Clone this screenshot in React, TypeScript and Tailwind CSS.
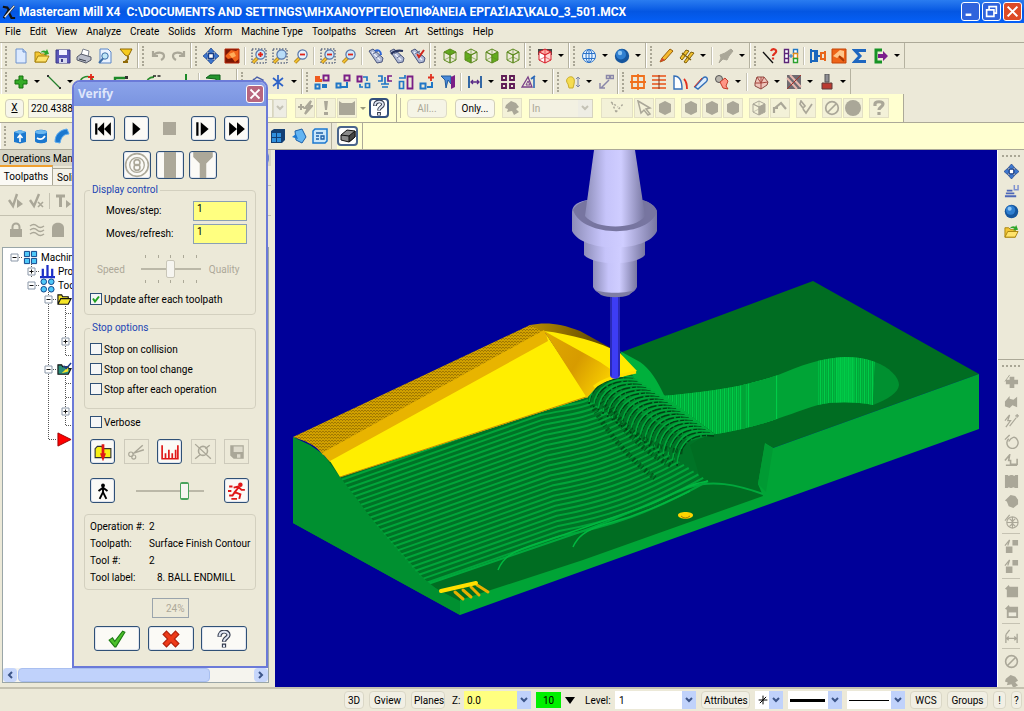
import type { ReactNode } from "react";
import clsx from "clsx";

const GREY = "#aaa798";

function Glyph({ children, size = 16 }: { children: ReactNode; size?: number }) {
  return (
    <svg width={size} height={size} viewBox="0 0 16 16" fill="none" aria-hidden="true" className="shrink-0">
      {children}
    </svg>
  );
}

function Cube({ top = "none", left = "none", right = "none", color = "#5c8a1e" }: { top?: string; left?: string; right?: string; color?: string }) {
  return (
    <g stroke={color} strokeWidth="1">
      <path d="M2 4l6-3 6 3-6 3z" fill={top} />
      <path d="M2 4l6 3v8l-6-3z" fill={left} />
      <path d="M14 4L8 7v8l6-3z" fill={right} />
      <path d="M8 1v6M2 12l6-3 6 3" strokeWidth=".6" />
    </g>
  );
}

function Lens({ color, sign, boxed }: { color: string; sign?: string; boxed?: boolean }) {
  return (
    <>
      {boxed && <path d="M1 1h14v14H1z" stroke="#23345e" strokeDasharray="1.5 1.5" />}
      <path d="M6.5 10L2 14.5" stroke="#a97a14" strokeWidth="3.4" />
      <path d="M6.5 10L2 14.5" stroke="#f0c030" strokeWidth="2" />
      <circle cx="9.5" cy="6.5" r="4.6" fill={color} stroke="#5373a8" strokeWidth="1.2" />
      {sign && <path d={sign} stroke="#e02418" strokeWidth="1.8" />}
    </>
  );
}

function Probe({ mark, color }: { mark: string; color: string }) {
  return (
    <>
      <path d="M1 3l4-2 10 9-1 4-5 1z" fill="#aeb8d4" stroke="#4a557c" />
      <path d="M4 4l8 8" stroke="#eef1fa" strokeWidth="1.5" />
      <path d="M5 6l5-3M8 10l4-3" stroke="#5b688f" />
      <path d={mark} stroke={color} strokeWidth="2" />
    </>
  );
}

const PLUS = "M9.5 4v5M7 6.5h5";
const MINUS = "M7 6.5h5";
const HEXAGON = "M8 1l6 3v8l-6 3-6-3V4z";

const glyphs: Record<string, ReactNode> = {
  new: <><path d="M3 1h7l3 3v11H3z" fill="#dceaff" stroke="#6f92cc" /><path d="M10 1v3h3" fill="#b9d0f3" stroke="#6f92cc" /></>,
  open: <><path d="M1 14V4h4l2 2h5v8z" fill="#f4c632" stroke="#a8830f" /><path d="M1 14l3-6h11l-3 6z" fill="#ffe36b" stroke="#a8830f" /><path d="M6 5c2-3 4-3 6-2l1-2 2 5-5 1 1-2c-2-1-3-1-5 0z" fill="#2fa62b" /></>,
  save: <><path d="M1 2h14v13H1z" fill="#5b57b8" stroke="#3b3a86" /><path d="M4 2h8v5H4z" fill="#f3f3ff" /><path d="M4 10h8v5H4z" fill="#d6d8ee" /><path d="M6 11h2v3H6z" fill="#3b3a86" /></>,
  print: <><path d="M5 7l2-6 6 2-1 6z" fill="#fff" stroke="#7d8390" /><path d="M1 9l4-3 10 3v3l-5 3-9-3z" fill="#b9bdc9" stroke="#565b69" /><path d="M3 11l7 2" stroke="#383d49" /></>,
  preview: <><path d="M3 1h8l3 3v11H3z" fill="#eaf3ff" stroke="#5a86c8" /><circle cx="8" cy="8" r="3.2" fill="#bfe6f7" stroke="#3d6ea8" /><path d="M6 10.5L2 15" stroke="#3d6ea8" strokeWidth="2" /></>,
  trophy: <><path d="M2 1h12l-3 6-2 1-2-1z" fill="#f7cb1d" stroke="#8f6907" /><path d="M10 8v3l-3 3M5 14h5" stroke="#8f6907" strokeWidth="1.8" /></>,
  undo: <path d="M3 3v5h5M3 8c3-5 11-4 11 0 0 2-1 3-3 4" stroke={GREY} strokeWidth="2.2" />,
  redo: <path d="M13 3v5H8M13 8C10 3 2 4 2 8c0 2 1 3 3 4" stroke={GREY} strokeWidth="2.2" />,
  pan: <><path d="M8 0l3.500 4h-7zM8 16l3.500-4h-7zM0 8l4-3.500v7zM16 8l-4-3.500v7z" fill="#3e78cf" stroke="#173d86" strokeWidth=".7" /><path d="M8 3v10M3 8h10" stroke="#3e78cf" strokeWidth="3" /><path d="M5.500 5.500h5v5h-5z" fill="#fff" stroke="#173d86" strokeWidth="1.400" /></>,
  fit: <><path d="M1 1h14v14H1z" fill="#7c1704" /><path d="M1 8l6-6 5 1 3-2v10l-4 3-3-4-4 1z" fill="#f0641c" /><path d="M5 6l5-2 2 4-4 2z" fill="#ffad5a" /><path d="M1 1h14v14H1z" stroke="#b32408" /></>,
  zoomIn: <Lens color="#cfe9fb" sign={PLUS} boxed />,
  zoomBox: <Lens color="#b8dcf8" boxed />,
  zoomDot: <Lens color="#e9f4fd" sign={MINUS} />,
  zoomOutBox: <Lens color="#cfe9fb" sign={MINUS} boxed />,
  zoomOut: <Lens color="#cfe9fb" sign={MINUS} />,
  probeA: <Probe mark="M7 3c3-2 6 0 6 4" color="#2b64d6" />,
  probeB: <Probe mark="M2 6c3-3 7-4 12-3" color="#27345f" />,
  probeC: <Probe mark="M7 6l2 3 5-7" color="#d1271c" />,
  cubeTop: <Cube top="#62ac1d" />,
  cubeLeft: <Cube left="#62ac1d" />,
  cubeRight: <Cube right="#62ac1d" />,
  cubeIso: <Cube />,
  cubeRed: <><path d="M1 1h14v6H1z" fill="#444" /><Cube top="#ffb1aa" left="#fff" right="#ffd7d3" color="#d81f2a" /></>,
  globe: <g stroke="#2b73c9"><circle cx="8" cy="8" r="6.500" fill="#e8f4ff" /><ellipse cx="8" cy="8" rx="3" ry="6.500" /><path d="M2 5.500h12M2 10.500h12M8 1.500v13" /></g>,
  sphere: <><circle cx="8" cy="8" r="7.200" fill="#16569e" /><circle cx="7" cy="6.500" r="5" fill="#2f7fd0" /><circle cx="6" cy="5" r="2.200" fill="#8ec6f4" /></>,
  pencil: <><path d="M2 14l2-4 8-9 3 2-8 9z" fill="#f5b92c" stroke="#99600a" /><path d="M2 14l2-4 3 2z" fill="#d8442c" /></>,
  pencils: <><path d="M1 10l6-8 3 1-7 9zM5 14l7-10 3 1-8 10z" fill="#f2c22f" stroke="#80600c" /><path d="M3 5l9 7" stroke="#80600c" strokeWidth="1.500" /></>,
  brushOff: <path d="M1 15l2-5-1-3 5-2 6-4 2 2-4 5-2 4-4-1z" fill={GREY} stroke={GREY} />,
  lineAsk: <><path d="M1 4l10 11" stroke="#111" strokeWidth="1.300" /><path d="M9 3c1-3 6-2 5 1-1 2-3 2-3 4M11 9.500v2" stroke="#e0301e" strokeWidth="2.200" /></>,
  ladders: <><path d="M1.500 1.500h4v4h-4zM1.500 5.500h4v5h-4zM1.500 10.500h4v4h-4z" stroke="#5b2478" strokeWidth="1.400" fill="#fff" /><path d="M10.500 1.500h4v4h-4z" stroke="#2077c6" strokeWidth="1.400" fill="#fff" /><path d="M10.500 5.500h4v5h-4z" stroke="#e08a1a" strokeWidth="1.400" fill="#fff" /><path d="M10.500 10.500h4v4h-4z" stroke="#2aa02c" strokeWidth="1.400" fill="#fff" /><path d="M6 8h4M8 6v4" stroke="#2077c6" /></>,
  compare: <><path d="M1 1v14M1 3h3M1 13h3" stroke="#1a67bd" strokeWidth="2" /><path d="M4 2h4v5h2v2H8v5H4z" fill="#1a67bd" /><path d="M15 3v10M14 5h-3v6h3" stroke="#e8661c" strokeWidth="2" /></>,
  hammer: <><path d="M1 1h14v14H1z" fill="#ee6418" stroke="#c44507" /><path d="M2 8l7-6 4 1v7l-4-2-3 2z" fill="#ffc68a" /><path d="M8 8l5 5" stroke="#a93a04" strokeWidth="2" /></>,
  sigma: <path d="M14 2.500H3l5 5.500-5 5.500h11" stroke="#1e67c0" strokeWidth="3" />,
  exportG: <><path d="M9 2H3v12h6" stroke="#169325" strokeWidth="3" /><path d="M5 6h5V3l5 5-5 5v-3H5z" fill="#7b1d8c" /></>,
  plus: <path d="M6 2h4v4h4v4h-4v4H6v-4H2V6h4z" fill="#35ab26" stroke="#15700f" />,
  line: <><path d="M2 2l12 12" stroke="#23802c" strokeWidth="1.300" /><path d="M1 1h2v2H1zM13 13h2v2h-2z" fill="#333" /></>,
  arc: <><path d="M1 9a7 7 0 0113-3" stroke="#2a8b2c" strokeWidth="1.500" /><path d="M12 0v7M9 3h6" stroke="#e02a1a" strokeWidth="1.800" /></>,
  corner: <><path d="M3 15V4h10" stroke="#1d8a29" strokeWidth="2.400" /><path d="M13 2h3v3h-3z" fill="#333" /></>,
  dashArc: <><path d="M1 12c0-6 3-9 8-9" stroke="#2a8b2c" strokeWidth="1.800" /><path d="M8 2h8" stroke="#222" strokeWidth="1.600" strokeDasharray="3 1.500" /></>,
  stem: <path d="M8 0v16M5 15h7" stroke="#1d8a29" strokeWidth="2" />,
  slab: <path d="M1 4l4-3h10v12l-4 2V5z" fill="#23942c" stroke="#0f5f18" />,
  dimension: <path d="M1 9l7-6 6 3-4 8M4 5l6 7" stroke="#4a5fa8" strokeWidth="1.400" />,
  star: <path d="M8 1v14M3 4l10 8M13 4L3 12" stroke="#2d62c8" strokeWidth="1.700" />,
  xform1: <><path d="M9.500 1.500h5v5h-5z" stroke="#7a1e86" strokeWidth="2" /><path d="M1 2h5v3h2v3H1z" fill="#ef5b1f" /><path d="M1.500 10.500h4v4h-4z" stroke="#2077c6" strokeWidth="2" /><path d="M8 10h5v4H8z" fill="#2077c6" /></>,
  xform2: <><path d="M9.500 1.500h5v5h-5z" stroke="#7a1e86" strokeWidth="2" /><path d="M1.500 9.500h4v4h-4zM6 13h6V8" stroke="#2077c6" strokeWidth="2" /></>,
  xform3: <><path d="M1.500 2.500h4v5h-4z" stroke="#7a1e86" strokeWidth="2" /><path d="M9.500 9.500h4v4h-4zM7 3h4v4M4 10v3h3" stroke="#2077c6" strokeWidth="1.700" /></>,
  xform4: <><path d="M1 2h4v5H1M4 10h8M8 3v7M5 13h6" stroke="#2077c6" strokeWidth="1.700" /><path d="M15 2h-4v5h4" stroke="#7a1e86" strokeWidth="1.700" /></>,
  xform5: <><path d="M9.500 2.500h5v12h-5z" stroke="#7a1e86" strokeWidth="1.800" /><path d="M1.500 7.500h4v7h-4zM1 4h6V1" stroke="#2077c6" strokeWidth="1.700" /></>,
  xform6: <><path d="M1.500 9.500h5v5h-5zM8 13h5V8" stroke="#2077c6" strokeWidth="2" /><path d="M12 0v7M9 3.500h6" stroke="#e0301e" strokeWidth="1.800" /></>,
  xform7: <><path d="M1 2h10v8L8 6 6 14 5 6z" fill="#4a8ad8" stroke="#205a9e" /><path d="M11 3l4-2v12l-4 2z" fill="#7a1e86" /></>,
  spread: <><path d="M2 2v12M14 2v12" stroke="#205a9e" strokeWidth="1.800" /><path d="M4 8h8M6 6L4 8l2 2M10 6l2 2-2 2" stroke="#5a2a86" strokeWidth="1.300" /></>,
  grid4: <path d="M2 2h4v4H2zM10 2h4v4h-4zM2 10h4v4H2zM10 10h4v4h-4z" stroke="#5f1c56" strokeWidth="1.900" />,
  triangle: <><path d="M1 13L7 3l4 10z" stroke="#7a4088" strokeWidth="1.300" /><path d="M5 11l2-4 2 4z" stroke="#7a4088" /><path d="M13 14V3M10 5l4-3" stroke="#2b68b8" strokeWidth="1.600" /></>,
  bulb: <><path d="M3 10c-6-7 9-12 6 0l-1 4H4z" fill="#f5dc50" stroke="#c9ad2c" /><path d="M13 3v10M11 5l2-2 2 2M11 11l2 2 2-2" stroke="#7d86a8" /></>,
  nodes: <path d="M3 14l8-8M8.500 1.500h3v3h-3zM12.500 1.500h3v3h-3zM2 9v5h5" stroke="#8a87a8" strokeWidth="1.500" />,
  frame: <path d="M2 2h12v12H2zM8 0v16M0 8h16" stroke="#f0701c" strokeWidth="1.800" />,
  rows: <><path d="M1 2h14M1 6h14M1 10h14M1 14h14" stroke="#e85016" strokeWidth="1.700" /><path d="M8 1v14" stroke="#88331a" /></>,
  loft: <><path d="M2 15V2c6 0 8 5 8 13z" fill="#fff" stroke="#3570b8" strokeWidth="1.400" /><path d="M12 5c2 2 3 6 3 10" stroke="#e0301e" strokeWidth="1.800" /></>,
  sweep: <><path d="M2 13l8-9c3-3 6 1 3 4l-8 7z" fill="#dfeefc" stroke="#3570b8" strokeWidth="1.400" /><path d="M1 13l8-9" stroke="#e0301e" /></>,
  mesh: <><circle cx="5" cy="5" r="3.500" fill="#b9b5ad" stroke="#555" /><path d="M6 8l5-4 3 3-2 5 2 3-5-1z" fill="#ff9686" stroke="#c33c2a" /></>,
  net: <><path d="M2 9l2-6h7l4 5-1 3-6 4-6-3z" fill="#efc5bb" stroke="#8c4a42" /><path d="M4 3l4 6 7-1M8 3v12M2 9h6M11 3l-3 6" stroke="#a6453c" /></>,
  hatch: <><path d="M1 1h14v14H1z" fill="#6f6a70" /><path d="M1 4l10 11M4 1l11 12" stroke="#e8b7ae" strokeWidth="2" /><path d="M1 15L15 1" stroke="#a4342c" /></>,
  cutter: <><path d="M6 0h4v8H6z" fill="#8e8e94" stroke="#555" /><path d="M3 9h10v6H3z" fill="#ba3a31" stroke="#5d3a3a" /></>,
  flash: <path d="M1 7h6M4 4v6M14 1L8 8h3l-3 6 7-8h-3z" stroke={GREY} strokeWidth="2" />,
  bang: <path d="M6 1h4L9 10H7zM6 12h4v3H6z" fill={GREY} />,
  block: <path d="M0 1l3 2h10l3-2v14H0z" fill={GREY} />,
  ask: <path d="M4 6V4c0-3 8-3 8 0S8 7 8 10M8 12v3" stroke={GREY} strokeWidth="3.200" />,
  askDark: <><path d="M4 6c0-6 8-6 8-1.500C12 7 8 7 8 10.500M8 12v3.500" stroke="#333b4e" strokeWidth="3.800" /><path d="M4 5.500c0-5 8-5 8-1C12 7 8 7 8 10M8 13v2" stroke="#dfe5f2" strokeWidth="1.800" /></>,
  clump: <path d="M2 5l5-4 5 2 3 4-3 2 3 3-5 3-2-4-5 1 1-3-3-1z" fill={GREY} />,
  dots: <path d="M2 2l7 5M3 3l4 9M7 12l7-8" stroke={GREY} strokeDasharray="2 2" strokeWidth="1.400" />,
  pick: <path d="M2 1l12 7-4 1 4 5-2 1-4-5-3 3z" stroke={GREY} strokeWidth="1.500" />,
  hex: <path d={HEXAGON} fill={GREY} />,
  cubeOff: <Cube right={GREY} color={GREY} />,
  bend: <path d="M2 13V8h4M3 8l6-5 5 6" stroke={GREY} strokeWidth="2.200" />,
  tickPen: <path d="M5 9l3 4 6-9M3 1l4 5-2 2-3-4z" stroke={GREY} strokeWidth="1.700" />,
  ban: <><circle cx="8" cy="8" r="6.300" stroke={GREY} strokeWidth="1.700" /><path d="M4 12l8-8" stroke={GREY} strokeWidth="1.700" /></>,
  disc: <circle cx="8" cy="8" r="8" fill={GREY} />,
  extrude: <><path d="M2 4l6-2 6 2v10l-6 1.500L2 14z" fill="#1b78cf" /><path d="M2 4l6-2 6 2-6 2z" fill="#6bb8f0" /><path d="M8 14V8M5.500 10L8 7l2.500 3" stroke="#fff" strokeWidth="1.600" /></>,
  revolve: <><path d="M2 4c0-3 12-3 12 0v9c0 3-12 3-12 0z" fill="#1b78cf" /><ellipse cx="8" cy="4" rx="6" ry="2" fill="#6bb8f0" /><path d="M4 10c3 2 6 1 8-2" stroke="#fff" strokeWidth="1.700" /></>,
  sweepBlue: <path d="M1 14C1 6 6 2 13 1l2 5c-5 0-8 3-9 9z" fill="#1b78cf" stroke="#59aaf0" />,
  boxBlue: <><path d="M1 3l3-2h11v11l-3 3H1z" fill="#123f74" /><path d="M2 5h4v4H2zM7 5h4v4H7zM2 10h4v4H2zM7 10h4v4H7z" fill="#2f8fdd" /></>,
  shapeBlue: <><path d="M4 3l7-2 4 8-4 6-6-3z" fill="#62b4f2" stroke="#1b5fa8" /><path d="M1 9l4-3 2 5z" fill="#1b78cf" /></>,
  listBlue: <><path d="M1 3l2-2h12v12l-2 2H1z" fill="#c9e6fb" stroke="#1b78cf" strokeWidth="1.500" /><path d="M4 5h7M4 8h3M4 11h3M9 8h3v3H9z" stroke="#1b5fa8" strokeWidth="1.300" /></>,
  solidDark: <><path d="M1 7l6-5 8 1v6l-6 5-8-2z" fill="#8a8a8a" stroke="#111" /><path d="M9 8l6-5v6l-6 5z" fill="#444" stroke="#111" /><path d="M1 7l8 1" stroke="#111" /></>,
  tickRun: <><path d="M1 7l4 6L9 1" stroke={GREY} strokeWidth="2.400" /><path d="M9 6l6 5-6 4z" fill={GREY} /></>,
  tickX: <><path d="M1 7l4 6L10 1" stroke={GREY} strokeWidth="2.400" /><path d="M9 9l5 5M14 9l-5 5" stroke={GREY} strokeWidth="1.600" /></>,
  tRun: <><path d="M1 3h9M5.500 3v11" stroke={GREY} strokeWidth="3" /><path d="M11 7l5 4-5 4z" fill={GREY} /></>,
  lock: <><path d="M2 7h12v8H2z" fill={GREY} /><path d="M4.500 7V5a3.500 3.500 0 017 0v2" stroke={GREY} strokeWidth="2" /></>,
  waves: <path d="M1 4q4-3 7 0t7 0M1 8q4-3 7 0t7 0M1 12q4-3 7 0t7 0" stroke={GREY} strokeWidth="1.500" />,
  ghost: <path d="M2 15V6c0-7 12-7 12 0v9z" fill={GREY} />,
  slots: <><path d="M3 7h6M2 10h9M1 13h12" stroke="#4e68b8" strokeWidth="2" /><path d="M11 1v5h4V1" stroke="#7f92d0" strokeWidth="1.600" /></>,
  quickPlus: <><path d="M1 8l5-7" stroke={GREY} /><path d="M6 3h5v3h4v5h-4v4H6v-4H2V6h4z" fill={GREY} /></>,
  quickCam: <path d="M1 8l5-6v3l4 1 4-3v11l-5-2-3 3-5-2z" fill={GREY} />,
  quickLine: <path d="M1 7l5-6-2 6h3L2 14M6 13l7-9M12 2h4M14 0v4" stroke={GREY} strokeWidth="1.300" />,
  quickArc: <path d="M1 6l5-5M5 5a6 6 0 109 1C12 2 8 3 5 8" stroke={GREY} strokeWidth="1.500" />,
  quickPoly: <path d="M1 7l5-6-1 6h2v4h7V5M2 12h12" stroke={GREY} strokeWidth="1.700" />,
  quickBox: <path d="M1 1h3l1 1 2-1h2l2 1 1-1h3v14h-3l-2-1-2 1H7l-2-1-1 1H1z" fill={GREY} />,
  quickBall: <path d="M1 7l6-6 5 1 3 4v5l-5 4-5-2-2-5z" fill={GREY} />,
  quickGlobe: <path d="M1 7l5-6M9 3a6 6 0 110 12A6 6 0 019 3zM9 3v12M3 9h12M6 5q6 4 0 8M12 5q-6 4 0 8" stroke={GREY} strokeWidth="1.200" />,
  quickTwo: <><path d="M1 7l5-6-2 6" stroke={GREY} strokeWidth="1.300" /><path d="M2 8h7v7H2zM9 1h6v6H9z" fill={GREY} /></>,
  quickSlab: <path d="M1 5l4-4 1 2h9v11H3V6z" fill={GREY} />,
  quickDisk: <><path d="M1 5l4-4 1 2h9v12H3V6z" fill={GREY} /><path d="M5 9h8v4H5z" fill="#eeecdd" /></>,
  quickDim: <path d="M2 6l4-5M2 6v9M14 5v10M3 10h10M5 8l-2 2 2 2M11 8l2 2-2 2" stroke={GREY} strokeWidth="1.400" />,
};

function IconButton({ name, className }: { name: string; className?: string }) {
  return (
    <button type="button" aria-label={name} className={clsx("flex h-5 shrink-0 items-center justify-center", className ?? "w-[21px]")}>
      <Glyph>{glyphs[name]}</Glyph>
    </button>
  );
}

function DropArrow() {
  return (
    <span className="flex w-3 shrink-0 items-center justify-center">
      <span className="border-x-[3px] border-t-[3px] border-x-transparent border-t-black" />
    </span>
  );
}

/** One dockable toolbar: grip, icons, "|" separators and "v" drop arrows */
function ToolGroup({ items }: { items: string }) {
  return (
    <div className="flex h-full shrink-0 items-center border-r border-[#b5b2a0] border-l border-l-white pr-px">
      <span className="mr-[3px] ml-[3px] h-5 w-px border-l-2 border-dotted border-[#a9a695]" />
      {items.split(" ").map((item, i) => {
        if (item === "|") return <span key={i} className="mx-[2px] h-[18px] w-[2px] border-l border-[#c5c2b2] bg-white" />;
        if (item === "v") return <DropArrow key={i} />;
        return <IconButton key={i} name={item} />;
      })}
    </div>
  );
}

function Chevron({ disabled, className }: { disabled?: boolean; className?: string }) {
  return (
    <span className={clsx("flex w-[14px] shrink-0 items-center justify-center", disabled ? "bg-[#eeede4]" : "bg-[#c0d2fb]", className)}>
      <svg width="8" height="6" viewBox="0 0 8 6" fill="none" aria-hidden="true">
        <path d="M1 1l3 3 3-3" stroke={disabled ? "#c4c2b5" : "#3c5588"} strokeWidth="2" />
      </svg>
    </span>
  );
}

const OFF_BTN = "w-5 border border-[#e3e0c4] bg-[#f3f1d8]";

function SelectionRow() {
  return (
    <div className="flex h-7 items-center">
      <div className="flex h-full items-center border-r border-[#aca998] bg-[#ffffd0] pr-[14px] pl-[5px]">
        <button type="button" className="h-[19px] w-[19px] rounded-sm border border-[#d2cfb8] bg-[#f6f5ea] text-[10px] leading-4 underline">X</button>
        <input aria-label="X coordinate" defaultValue="220.4388" className="ml-1 h-[19px] w-[245px] border border-[#d9d6bf] bg-[#f6f5ea] px-[2px] text-[10px]" />
        <Chevron disabled className="h-[19px] border border-[#dedcc9]" />
        <div className="ml-2 flex gap-px">
          <IconButton name="flash" className={OFF_BTN} />
          <IconButton name="bang" className={OFF_BTN} />
          <IconButton name="block" className={OFF_BTN} />
        </div>
        <span className="opacity-40"><DropArrow /></span>
        <IconButton name="askDark" className="w-5 rounded-sm border-2 border-[#33507e] bg-white" />
        <span className="ml-[7px] h-full w-px bg-[#aca998]" />
        <span className="mr-[6px] ml-[3px] h-5 w-px bg-[#c4c1a8]" />
        <button type="button" disabled className="h-[19px] w-10 rounded-sm border border-[#dedbc6] bg-[#f5f4e6] text-[10px] text-[#a9a695]">All...</button>
        <button type="button" className="ml-2 h-[19px] w-10 rounded-sm border border-[#d2cfb8] bg-[#f8f7ee] text-[10px]">Only...</button>
        <IconButton name="clump" className="mx-[7px] w-5 border border-[#e3e0c4] bg-[#f3f1d8]" />
        <div className="flex h-[19px] w-16 border border-[#d6d3bf] bg-[#f3f1e2]">
          <select aria-label="Selection mode" disabled className="min-w-0 flex-1 appearance-none px-[2px] text-[10px] text-[#a9a695]">
            <option>In</option>
          </select>
          <Chevron disabled />
        </div>
        <div className="ml-2 flex gap-px">
          <IconButton name="dots" className="w-8 border border-[#e3e0c4] bg-[#f3f1d8]" />
          <IconButton name="pick" className={OFF_BTN} />
          <IconButton name="hex" className={OFF_BTN} />
        </div>
        <div className="ml-[6px] flex gap-px">
          <IconButton name="hex" className={OFF_BTN} />
          <IconButton name="hex" className={OFF_BTN} />
          <IconButton name="hex" className={OFF_BTN} />
        </div>
        <div className="ml-[6px] flex gap-px">
          <IconButton name="cubeOff" className={OFF_BTN} />
          <IconButton name="bend" className={OFF_BTN} />
        </div>
        <div className="ml-[6px] flex gap-[6px]">
          <IconButton name="tickPen" className={OFF_BTN} />
          <div className="flex gap-px">
            <IconButton name="ban" className={OFF_BTN} />
            <IconButton name="disc" className={OFF_BTN} />
          </div>
          <IconButton name="ask" className={OFF_BTN} />
        </div>
      </div>
    </div>
  );
}

function Toolbars() {
  return (
    <div className="shrink-0 bg-[#ece9d8]">
      <div className="flex h-[26px] border-t border-[#aca998] pl-px">
        <ToolGroup items="new open save print preview trophy" />
        <ToolGroup items="undo redo" />
        <ToolGroup items="pan fit | zoomIn zoomBox zoomDot | zoomOutBox zoomOut | probeA probeB probeC" />
        <ToolGroup items="cubeTop cubeLeft cubeRight cubeIso" />
        <ToolGroup items="cubeRed v" />
        <ToolGroup items="globe v sphere v" />
        <ToolGroup items="pencil pencils v | brushOff v" />
        <ToolGroup items="lineAsk ladders | compare hammer sigma exportG v" />
      </div>
      <div className="flex h-[26px] border-t border-[#cfccbb] pl-px">
        <ToolGroup items="plus v line v arc v corner v dashArc v stem | slab v" />
        <ToolGroup items="dimension star v" />
        <ToolGroup items="xform1 xform2 xform3 xform4 xform5 xform6 xform7 | spread v grid4 triangle v" />
        <ToolGroup items="bulb v nodes" />
        <ToolGroup items="frame rows loft sweep mesh v | net v hatch v cutter v" />
      </div>
      <SelectionRow />
      <div className="flex h-[28px] items-center border-y border-[#aca998] bg-[#ffffd0]">
        <div className="flex h-full items-center bg-[#ece9d8] pr-[5px]">
          <ToolGroup items="extrude revolve sweepBlue boxBlue shapeBlue listBlue extrude revolve | sweepBlue boxBlue extrude shapeBlue boxBlue shapeBlue listBlue" />
        </div>
        <div className="flex h-full items-center border-r border-[#aca998] pr-1">
          <IconButton name="solidDark" className="w-[21px] rounded-sm border-2 border-[#4a658c] bg-white" />
        </div>
      </div>
    </div>
  );
}

/* ---------- operations tree ---------- */

type Cell = "" | "|" | "T" | "L" | "+" | "-" | "-|" | "+|";

function Guide({ kind }: { kind: Cell }) {
  const box = kind.startsWith("+") || kind.startsWith("-");
  return (
    <svg width="17" height="14" viewBox="0 0 17 14" fill="none" aria-hidden="true" className="shrink-0">
      {kind !== "" && kind !== "+" && kind !== "-" && (
        <path d={kind === "L" ? "M8.500 0v7" : "M8.500 0v14"} stroke="#555" strokeDasharray="1 1" />
      )}
      {kind !== "" && kind !== "|" && <path d="M9 7.500h8" stroke="#555" strokeDasharray="1 1" />}
      {box && <path d="M5 4h7v7H5z" fill="#fff" stroke="#8a97a8" />}
      {box && <path d="M6.500 7.500h4" stroke="#111" />}
      {kind.startsWith("+") && <path d="M8.500 5.500v4" stroke="#111" />}
    </svg>
  );
}

const treeIcons: Record<string, ReactNode> = {
  machine: <path d="M1.500 1.500h5.500v5.500h-5.500zM9 1.500h5.500v5.500H9zM1.500 9h5.500v5.500h-5.500zM9 9h5.500v5.500H9z" fill="#4fc8f8" stroke="#0b3f86" />,
  props: <path d="M3 5v9M8 1v13M13 5v9M0 14h16" stroke="#1d2fc8" strokeWidth="2.400" />,
  group: <g fill="#4fc8f8" stroke="#0b3f86"><circle cx="4" cy="4" r="3" /><circle cx="12" cy="4" r="3" /><circle cx="4" cy="12" r="3" /><circle cx="12" cy="12" r="3" /></g>,
  folder: <path d="M1 13V3h4l1 2h6v2h3l-3 6zM1 13l3-6h8" fill="#f5e527" stroke="#111" strokeWidth="1.200" />,
  folderOn: <><path d="M1 13V3h4l1 2h6v2h3l-3 6z" fill="#2d8f7a" stroke="#111" strokeWidth="1.200" /><path d="M5 12l7-7v5z" fill="#f5e527" /><path d="M7 4l3 3 5-6" stroke="#1c3b8a" strokeWidth="1.500" /></>,
  insert: <path d="M1 1l14 7L1 15z" fill="#f00" stroke="#900" />,
};

const treeRows: { cells: Cell[]; icon?: string; text?: string }[] = [
  { cells: ["-"], icon: "machine", text: "Machine" },
  { cells: ["", "+|"], icon: "props", text: "Prop" },
  { cells: ["", "-"], icon: "group", text: "Tool" },
  { cells: ["", "", "-|"], icon: "folder" },
  { cells: ["", "", "|", "T"] },
  { cells: ["", "", "|", "T"] },
  { cells: ["", "", "|", "+|"] },
  { cells: ["", "", "|", "L"] },
  { cells: ["", "", "-|"], icon: "folderOn" },
  { cells: ["", "", "|", "T"] },
  { cells: ["", "", "|", "T"] },
  { cells: ["", "", "|", "+|"] },
  { cells: ["", "", "|", "L"] },
  { cells: ["", "", "L"], icon: "insert" },
];

function OperationsPanel() {
  return (
    <aside className="flex w-[275px] shrink-0 flex-col border-r-4 border-[#ece9d8] bg-[#ece9d8]">
      <div className="flex h-4 items-center justify-between bg-[#d8d5c6] px-[2px]">
        <h2 className="text-[10px]">Operations Mana</h2>
        <span className="h-3 w-3 rounded-sm border border-[#6d86c8] bg-white" />
      </div>
      <div className="flex h-[20px] items-end border-b border-[#c4c1b0]">
        <button type="button" className="h-5 w-[53px] border-t-2 border-r border-t-[#f0a030] border-r-[#a9a695] bg-[#fbfaf5] text-[10px]">Toolpaths</button>
        <button type="button" className="h-[17px] w-12 border-t border-r border-[#a9a695] bg-[#f4f2e8] pl-1 text-left text-[10px]">Soli</button>
      </div>
      <div className="flex h-[30px] items-center border-b border-[#c4c1b0] pl-[5px]">
        <IconButton name="tickRun" />
        <IconButton name="tickX" />
        <span className="mx-[2px] h-4 w-px bg-[#c5c2b2]" />
        <IconButton name="tRun" />
      </div>
      <div className="flex h-[31px] items-center pb-1 pl-[5px]">
        <IconButton name="lock" />
        <IconButton name="waves" />
        <IconButton name="ghost" />
      </div>
      <div className="mx-[2px] mb-1 flex flex-1 flex-col border border-[#9aa6a8] bg-white">
        <ul className="flex-1 pt-[2px] pl-[3px]">
          {treeRows.map((row, i) => (
            <li key={i} className="flex h-[14px] items-center text-[10px]">
              {row.cells.map((cell, c) => (
                <Guide key={c} kind={cell} />
              ))}
              {row.icon && <Glyph size={15}>{treeIcons[row.icon]}</Glyph>}
              {row.text && <span className="ml-[3px]">{row.text}</span>}
            </li>
          ))}
        </ul>
        <div className="flex h-[14px] bg-[#f5f4ee]">
          <button type="button" aria-label="Scroll left" className="flex w-[14px] items-center justify-center rounded-sm bg-[#c6d6fb]">
            <svg width="6" height="8" viewBox="0 0 6 8" fill="none"><path d="M5 1L2 4l3 3" stroke="#3c5588" strokeWidth="2" /></svg>
          </button>
          <span className="mx-px w-[192px] rounded-sm border border-[#a9bff0] bg-[#c0d2fb]" />
          <button type="button" aria-label="Scroll right" className="ml-auto flex w-[14px] items-center justify-center rounded-sm bg-[#c6d6fb]">
            <svg width="6" height="8" viewBox="0 0 6 8" fill="none"><path d="M1 1l3 3-3 3" stroke="#3c5588" strokeWidth="2" /></svg>
          </button>
        </div>
      </div>
    </aside>
  );
}

/* ---------- stock simulation ---------- */

const range = (n: number) => Array.from({ length: n }, (_, i) => i);

// Passes of the surface finish contour, from the top ridge down to the floor
const passes = range(26).map((i) => {
  const t = i / 25;
  const x0 = 338 + 88 * t;
  const y0 = 481 + 102 * t;
  const y1 = 405 + 126 * t;
  const ex = 588 + 120 * t;
  const ey = 400 + 81 * t;
  return `M${x0.toFixed(1)} ${y0.toFixed(1)}L${540 + 20 * t} ${(y1 + 5).toFixed(1)}C${(560 + 50 * t).toFixed(1)} ${(y1 - 4 * t).toFixed(1)} ${(575 + 75 * t).toFixed(1)} ${(ey + 26 * t + 6).toFixed(1)} ${ex.toFixed(1)} ${ey.toFixed(1)}`;
});

// Arcs over the rounded shoulder next to the pocket
const arcs = range(20).map((i) => {
  const t = i / 19;
  const sx = 589 + 88 * t;
  const sy = 402 + 62 * t;
  const ex = 634 + 80 * t;
  const ey = 377 + 57 * t;
  return `M${sx.toFixed(1)} ${sy.toFixed(1)}C${(sx + 2).toFixed(1)} ${(sy - 18).toFixed(1)} ${(ex - 26).toFixed(1)} ${(ey - 4).toFixed(1)} ${ex.toFixed(1)} ${ey.toFixed(1)}`;
});

const WALL = "M662 396C705 392 740 388 778 375C800 366 820 358 845 357C860 357 870 360 875 362L873 405C858 402 835 401 818 405C795 412 775 421 742 429C730 432 715 434 704 436Z";

function Viewport() {
  return (
    <svg viewBox="275 150 722 537" preserveAspectRatio="xMidYMid slice" role="img" aria-label="Stock simulation" className="h-full min-w-0 flex-1 bg-[#000099]">
      <defs>
        <linearGradient id="holder">
          <stop offset="0" stopColor="#8d8db8" />
          <stop offset=".35" stopColor="#c6c4fa" />
          <stop offset=".6" stopColor="#cfcdff" />
          <stop offset="1" stopColor="#7776a0" />
        </linearGradient>
        <linearGradient id="facet" x1="0" y1="0" x2="1" y2=".5">
          <stop offset="0" stopColor="#e0a800" />
          <stop offset=".5" stopColor="#d79b00" />
          <stop offset="1" stopColor="#ffd800" />
        </linearGradient>
        <linearGradient id="cap">
          <stop offset="0" stopColor="#b98d00" />
          <stop offset="1" stopColor="#4a3a00" />
        </linearGradient>
        <pattern id="weave" width="3" height="3" patternUnits="userSpaceOnUse">
          <path d="M0 0h3v3H0z" fill="#d0a000" />
          <path d="M0 0h1v1H0zM1 2h2v1H1z" fill="#a07800" />
        </pattern>
        <pattern id="flutes" width="4" height="8" patternUnits="userSpaceOnUse">
          <path d="M0 0h4v8H0z" fill="#00a838" />
          <path d="M0 0h1v8H0z" fill="#00cc48" />
          <path d="M2 0h1v8H2z" fill="#00b840" />
        </pattern>
        <clipPath id="wall"><path d={WALL} /></clipPath>
      </defs>

      <path d="M293 437L460 600V615L293 523Z" fill="#009030" />
      <path d="M320 460L590 380L622 352L813 281L979 374L773 448L767 500L460 602L430 585Z" fill="#006d22" />
      <path d="M460 600L583 560L763 496L758 484L765 443L773 448L979 374V429L460 615Z" fill="#00a436" />
      <path d="M765 444L773 448L766 492L758 484Z" fill="#009a33" />

      <path d={WALL} fill="#00a436" />
      <g clipPath="url(#wall)">
        <path d="M660 350h118v90H660zM818 350h58v60h-58z" fill="url(#flutes)" />
        <path d="M742 350h3v90h-3zM750 350h26v90h-26z" fill="#00a436" />
        <path d="M836 350h18v60h-18z" fill="#00cc48" opacity=".55" />
      </g>
      <path d="M875 362C889 367 899 377 899 385C898 393 888 399 873 405Z" fill="#009030" />

      <path d="M338 477L580 399L600 384L632 375L662 396L716 435L704 436L690 445L700 478L655 506L560 535L428 583Z" fill="#007326" />
      <path d="M600 388L628 377L645 380L664 396L715 434L690 441L668 428L640 414Z" fill="#008f30" />
      <path d="M620 351L640 362C650 369 657 380 664 395L714 434C690 424 665 404 650 392L634 378Z" fill="#00b03c" />
      <g fill="none">
        {passes.map((d, i) => (
          <path key={i} d={d} stroke="#00a53a" strokeWidth="2" />
        ))}
        {arcs.map((d, i) => (
          <path key={i} d={d} stroke="#003f14" strokeWidth="1.500" transform="translate(0 2)" strokeDasharray="9 2 4 1" />
        ))}
        {arcs.map((d, i) => (
          <path key={i} d={d} stroke="#00a83b" strokeWidth="1.600" />
        ))}
        <path d="M592 405C606 430 625 455 655 478M602 402C620 425 640 450 672 466M612 408C625 430 650 448 684 452" stroke="#00380f" strokeWidth="5" strokeDasharray="1 3 2 2" opacity=".6" />
        <path d="M422 586L580 532C620 518 655 500 690 487C712 480 735 484 763 494" stroke="#00a83c" strokeWidth="2" />
        <path d="M498 570C505 552 520 549 560 536L640 508C670 498 680 486 708 481" stroke="#00b840" strokeWidth="1.500" />
        <path d="M573 547C577 538 584 530 606 524C640 515 665 503 690 491" stroke="#00b840" strokeWidth="1.500" />
      </g>

      <path d="M293 437L310 445L323 454L340 477L360 503L387 540L413 570L438 590L460 601V615L293 523Z" fill="#009030" />

      <path d="M293 437L530 325L546 331L323 455C315 444 305 441 293 437Z" fill="url(#weave)" />
      <path d="M530 325C545 322 560 323 580 331L618 352L600 345L545 333Z" fill="url(#cap)" />
      <path d="M322 453L544 330L550 342L330 462Z" fill="#e8b400" />
      <path d="M330 461L548 341L546 334L588 397L340 477Z" fill="#ffee00" />
      <path d="M340 477L586 397" stroke="#c98a00" />
      <path d="M544 331L610 362L628 374L600 383L587 398Z" fill="url(#facet)" />
      <path d="M544 331C570 334 600 342 620 353L637 371L622 377L600 362Z" fill="#ffea00" />
      <path d="M594 387C604 379 616 376 636 372" stroke="#ffe000" strokeWidth="3" fill="none" />

      <g fill="none" strokeLinecap="round">
        <path d="M455 592L463 599M463 590L471 597M471 587L479 595M477 585L488 592" stroke="#e8b000" strokeWidth="3" />
        <path d="M441 591L476 583" stroke="#ffe000" strokeWidth="4" />
      </g>
      <path d="M678 515c0-4 15-4 15 0 0 5-15 5-15 0z" fill="#ffd400" />
      <path d="M681 516q4 4 9 0" stroke="#a87800" fill="none" />

      <path d="M610 293h10v82c0 5-10 5-10 0z" fill="#3d3df5" />
      <path d="M610 293h2v84l-2-2zM618 293h2v82l-2 2z" fill="#2a2ab8" />
      <path d="M593 258H637V287C633 299 597 299 593 287Z" fill="url(#holder)" />
      <path d="M594 289C600 294 630 294 636 289L629 295C622 298 608 298 601 295Z" fill="#7e7da4" />
      <path d="M584 240H645V255C636 266 594 266 584 255Z" fill="url(#holder)" />
      <path d="M572 212C572 204 580 201 588 200H642C650 202 657 207 657 213V231C648 253 582 253 572 231Z" fill="url(#holder)" />
      <path d="M573 210C576 203 586 200 590 200H642C650 202 655 206 657 211C650 238 582 238 573 210Z" fill="#7775a0" />
      <path d="M594 150H635L645 216C635 230 596 230 585 216Z" fill="url(#holder)" />
    </svg>
  );
}

/* ---------- verify dialog ---------- */

const XP_BTN = "flex items-center justify-center rounded-[3px] border border-[#2f5076] bg-[#fbfaf6] shadow-[inset_0_0_0_1px_#dfe4ee]";

function DialogButton({ label, disabled, children }: { label: string; disabled?: boolean; children: ReactNode }) {
  return (
    <button type="button" aria-label={label} disabled={disabled} className={clsx("h-[25px] w-[25px]", disabled ? "flex items-center justify-center border border-[#cdcabb] bg-[#ece9d8]" : XP_BTN)}>
      <Glyph size={18}>{children}</Glyph>
    </button>
  );
}

function Check({ label, checked }: { label: string; checked?: boolean }) {
  return (
    <label className="flex h-5 items-center gap-[2px]">
      <span className="grid">
        <input type="checkbox" defaultChecked={checked} className="peer col-start-1 row-start-1 h-3 w-3 appearance-none border border-[#2f5076] bg-[#f5f6f6]" />
        <svg width="12" height="12" viewBox="0 0 12 12" fill="none" aria-hidden="true" className="pointer-events-none col-start-1 row-start-1 hidden peer-checked:block">
          <path d="M3 5.500l2 3 4-5" stroke="#21a121" strokeWidth="2" />
        </svg>
      </span>
      {label}
    </label>
  );
}

function Ticks() {
  return (
    <div className="flex justify-between px-1">
      {range(5).map((i) => (
        <span key={i} className="h-[3px] w-px bg-[#aca998]" />
      ))}
    </div>
  );
}

const SLIDER = "w-full appearance-none bg-transparent [&::-webkit-slider-runnable-track]:h-[2px] [&::-webkit-slider-runnable-track]:bg-[#bbb8a8] [&::-webkit-slider-thumb]:-mt-[8px] [&::-webkit-slider-thumb]:h-[18px] [&::-webkit-slider-thumb]:w-[9px] [&::-webkit-slider-thumb]:appearance-none [&::-webkit-slider-thumb]:rounded-[2px] [&::-webkit-slider-thumb]:border [&::-webkit-slider-thumb]:bg-[#f6f5f0]";

function Numeric({ id, label }: { id: string; label: string }) {
  return (
    <div className="flex h-[23px] items-center justify-between pr-[8px] pl-[21px]">
      <label htmlFor={id}>{label}</label>
      <input id={id} defaultValue="1" className="h-[20px] w-[54px] border border-[#8aa0b4] bg-[#ffff80] px-[3px] pb-1" />
    </div>
  );
}

function VerifyDialog() {
  const facts = [
    ["Operation #:", "2"],
    ["Toolpath:", "Surface Finish Contour"],
    ["Tool #:", "2"],
    ["Tool label:", "8. BALL ENDMILL"],
  ];
  return (
    <section role="dialog" aria-labelledby="verify-title" className="absolute top-20 left-[72px] flex w-[196px] flex-col rounded-t-lg border-2 border-[#6b7ad8] bg-[#ece9d8] pb-[15px] text-[10px]">
      <header className="flex h-6 items-center justify-between rounded-t-md bg-linear-to-b from-[#8ba3ea] to-[#7a94e0] pr-[2px] pl-1">
        <h2 id="verify-title" className="font-['Noto_Sans'] text-xs font-bold text-[#dfe6fb]">Verify</h2>
        <button type="button" aria-label="Close" className="flex h-[18px] w-[18px] items-center justify-center rounded-[3px] border border-white bg-[#b8667e]">
          <Glyph size={12}><path d="M2 2l12 12M14 2L2 14" stroke="#fff" strokeWidth="2.500" /></Glyph>
        </button>
      </header>

      <div className="mt-[10px] flex justify-between pr-[17px] pl-4">
        <DialogButton label="Rewind"><path d="M2 3v10" stroke="#000" strokeWidth="2" /><path d="M9 2v12L3 8zM15 2v12L9 8z" fill="#000" /></DialogButton>
        <DialogButton label="Play"><path d="M5 2l7 6-7 6z" fill="#000" /></DialogButton>
        <button type="button" aria-label="Stop" disabled className="flex h-[25px] w-[25px] items-center justify-center"><span className="h-[13px] w-[13px] bg-[#aca899]" /></button>
        <DialogButton label="Step"><path d="M3 2v12" stroke="#000" strokeWidth="2" /><path d="M6 2l7 6-7 6z" fill="#000" /></DialogButton>
        <DialogButton label="Fast forward"><path d="M1 2l7 6-7 6zM8 2l7 6-7 6z" fill="#000" /></DialogButton>
      </div>
      <div className="mt-[10px] ml-[49px] flex gap-[5px]">
        <button type="button" aria-label="No tool" className={clsx(XP_BTN, "h-7 w-7")}>
          <Glyph size={26}><circle cx="8" cy="8" r="7" stroke="#aca899" /><circle cx="8" cy="8" r="4.500" stroke="#aca899" strokeWidth=".8" /><circle cx="8" cy="6.500" r="1.800" stroke="#aca899" /><circle cx="8" cy="9.500" r="1.800" stroke="#aca899" /></Glyph>
        </button>
        <button type="button" aria-label="Tool" className={clsx(XP_BTN, "h-7 w-7")}><span className="h-full w-3 bg-[#aca899]" /></button>
        <button type="button" aria-label="Tool and holder" className={clsx(XP_BTN, "h-7 w-7 bg-[#f0eee2]")}>
          <Glyph size={26}><path d="M2 0h12v3l-4 4v9H6V7L2 3z" fill="#aca899" /></Glyph>
        </button>
      </div>

      <fieldset className="mx-[10px] mt-1 h-[132px] rounded border border-[#d3d0bf]">
        <legend className="ml-[5px] px-[2px] leading-[14px] text-[#1c46b4]">Display control</legend>
        <div className="mt-[2px]">
          <Numeric id="moves-step" label="Moves/step:" />
          <Numeric id="moves-refresh" label="Moves/refresh:" />
        </div>
        <div className="mt-[10px] flex items-center gap-4 pl-3 text-[#aca899]">
          <label htmlFor="quality">Speed</label>
          <div className="w-[60px]">
            <Ticks />
            <input id="quality" type="range" disabled className={clsx(SLIDER, "block h-[22px] [&::-webkit-slider-thumb]:border-[#c9c6b8]")} />
            <Ticks />
          </div>
          <span className="-ml-2">Quality</span>
        </div>
        <div className="mt-[6px] pl-[5px]"><Check label="Update after each toolpath" checked /></div>
      </fieldset>

      <fieldset className="mx-[10px] mt-[6px] h-[88px] rounded border border-[#d3d0bf]">
        <legend className="ml-[5px] px-[2px] leading-[14px] text-[#1c46b4]">Stop options</legend>
        <div className="mt-1 pl-[5px]">
          <Check label="Stop on collision" />
          <Check label="Stop on tool change" />
          <Check label="Stop after each operation" />
        </div>
      </fieldset>

      <div className="mt-[3px] pl-4"><Check label="Verbose" /></div>

      <div className="mt-[7px] flex justify-between pr-[17px] pl-4">
        <DialogButton label="Configure"><path d="M1 13V5l2-2h4l1 2h7v8z" fill="#f7ef16" stroke="#333" /><path d="M8 1v10M6.500 9L8 13l1.500-4" stroke="#e01818" strokeWidth="2.400" /></DialogButton>
        <DialogButton label="Cut" disabled><path d="M14 2L5 10M15 6L6 9" stroke={GREY} strokeWidth="1.300" /><circle cx="3.500" cy="10" r="2" stroke={GREY} /><circle cx="6" cy="12.500" r="1.800" stroke={GREY} /></DialogButton>
        <DialogButton label="Measure"><path d="M1 2v12h14V2M4 9v5M7 6v8M10 9v5M13 6v8" stroke="#e01818" strokeWidth="1.500" /></DialogButton>
        <DialogButton label="Zoom" disabled><circle cx="8" cy="7" r="4" stroke={GREY} strokeWidth="1.400" /><path d="M1 1l14 13M14 2l-4 3M6 10l-5 4" stroke={GREY} strokeWidth="1.200" /></DialogButton>
        <DialogButton label="Save as" disabled><path d="M2 2h12v12H5l-3-3z" fill={GREY} /><path d="M5 3h8v5H5zM8 10h3v3H8z" fill="#dedbcc" /></DialogButton>
      </div>

      <div className="mt-[14px] flex items-center justify-between pr-[17px] pl-4">
        <DialogButton label="Slower"><circle cx="8" cy="3" r="1.700" fill="#000" /><path d="M8 4v6M4 8l4-3 4 3M8 9l-3 6M8 9l3 6" stroke="#000" strokeWidth="1.700" /></DialogButton>
        <div className="w-[68px]">
          <input type="range" aria-label="Verify speed" defaultValue={76} className={clsx(SLIDER, "block h-5 [&::-webkit-slider-thumb]:border-y-2 [&::-webkit-slider-thumb]:border-[#49a35c]")} />
        </div>
        <DialogButton label="Faster"><circle cx="11" cy="2.500" r="2" fill="#e01818" /><path d="M10 4L6 9l5 2-1 4M6 9l-2 3H1M5 5l4-1 3 3h3M1 4h3M0 8h3M3 15h5" stroke="#e01818" strokeWidth="1.700" /></DialogButton>
      </div>

      <dl className="mx-[10px] mt-[11px] rounded border border-[#d3d0bf] py-[3px] pl-[5px]">
        {facts.map(([name, value], i) => (
          <div key={name} className="flex h-[17px] items-center">
            <dt className="w-[59px]">{name}</dt>
            <dd className={clsx("whitespace-nowrap", i === 3 && "pl-2")}>{value}</dd>
          </div>
        ))}
      </dl>

      <output className="mx-auto mt-2 flex h-5 w-[37px] items-center justify-end border border-[#9aa4ac] pr-[3px] text-[#aca899]">24%</output>

      <div className="mt-2 flex justify-between pr-[19px] pl-5">
        <button type="button" aria-label="OK" className={clsx(XP_BTN, "h-[25px] w-[46px]")}>
          <Glyph size={18}><path d="M1 9l3-2 2 3 7-9 2 1-8 13H6z" fill="#4cc12a" stroke="#1d7a14" /></Glyph>
        </button>
        <button type="button" aria-label="Cancel" className={clsx(XP_BTN, "h-[25px] w-[46px]")}>
          <Glyph size={18}><path d="M1 4l3-3 4 4 4-4 3 3-4 4 4 4-3 3-4-4-4 4-3-3 4-4z" fill="#ee3a18" stroke="#b01e08" /></Glyph>
        </button>
        <button type="button" aria-label="Help" className={clsx(XP_BTN, "h-[25px] w-[46px]")}>
          <Glyph size={18}>{glyphs.askDark}</Glyph>
        </button>
      </div>
    </section>
  );
}

/* ---------- frame ---------- */

function SideGroup({ items }: { items: string }) {
  return (
    <div className="flex flex-col items-center">
      <span className="mt-[5px] mb-1 h-[2px] w-[18px] border-t-2 border-dotted border-[#a9a695]" />
      {items.split(" ").map((item, i) =>
        item === "|" ? (
          <span key={i} className="my-[2px] h-px w-[18px] bg-[#c5c2b2]" />
        ) : (
          <button key={i} type="button" aria-label={item} className="flex h-5 w-5 shrink-0 items-center justify-center">
            <Glyph size={15}>{glyphs[item]}</Glyph>
          </button>
        ),
      )}
    </div>
  );
}

const FLAT = "h-[18px] shrink-0 rounded-sm border border-[#dad7c6] bg-[#f1efe4] px-[2px] text-center";

function StatusBar() {
  return (
    <footer className="flex h-6 shrink-0 items-center gap-[5px] overflow-hidden border-t-2 border-[#c4c1b0] bg-[#ece9d8] pl-[344px] text-[10px]">
      <button type="button" className={clsx(FLAT, "w-5")}>3D</button>
      <button type="button" className={clsx(FLAT, "w-[37px]")}>Gview</button>
      <button type="button" className={clsx(FLAT, "w-[34px] px-0")}>Planes</button>
      <div className="flex h-[18px] shrink-0 items-center">
        <label htmlFor="depth" className="w-[14px] pl-[2px]">Z:</label>
        <input id="depth" defaultValue="0.0" className="h-full w-[53px] bg-[#ffff80] px-[3px]" />
        <Chevron className="h-full" />
      </div>
      <div className="flex h-[18px] shrink-0 items-center gap-[3px]">
        <button type="button" className="h-4 w-[25px] bg-[#00f000]">10</button>
        <button type="button" aria-label="Choose colour" className="flex w-3 justify-center">
          <span className="border-x-[5px] border-t-[7px] border-x-transparent border-t-black" />
        </button>
      </div>
      <div className="flex h-[18px] shrink-0 items-center">
        <label htmlFor="level" className="w-[34px] pl-1">Level:</label>
        <input id="level" defaultValue="1" className="h-full w-[67px] bg-white px-1" />
        <Chevron className="h-full" />
      </div>
      <button type="button" className={clsx(FLAT, "w-[49px] px-0")}>Attributes</button>
      <button type="button" aria-label="Point style" className="flex h-[18px] w-[28px] shrink-0 items-center justify-between bg-white pl-[3px]">
        <Glyph size={10}><path d="M8 1v14M1 8h14M3 13L13 3" stroke="#000" strokeWidth="1.600" /></Glyph>
        <Chevron className="h-full" />
      </button>
      <button type="button" aria-label="Line style" className="flex h-[18px] w-[54px] shrink-0 items-center justify-between bg-white pl-[2px]">
        <span className="h-[3px] w-[35px] bg-black" />
        <Chevron className="h-full" />
      </button>
      <button type="button" aria-label="Line width" className="flex h-[18px] w-[58px] shrink-0 items-center justify-between bg-white pl-[2px]">
        <span className="h-px w-[40px] bg-black" />
        <Chevron className="h-full" />
      </button>
      <button type="button" className={clsx(FLAT, "w-8")}>WCS</button>
      <button type="button" className={clsx(FLAT, "w-[41px] px-0")}>Groups</button>
      <button type="button" className={clsx(FLAT, "w-[13px]")}>!</button>
      <button type="button" className={FLAT}>?</button>
    </footer>
  );
}

const menus = ["File", "Edit", "View", "Analyze", "Create", "Solids", "Xform", "Machine Type", "Toolpaths", "Screen", "Art", "Settings", "Help"];

export default function App() {
  return (
    <div className="relative flex h-screen flex-col overflow-hidden bg-[#ece9d8] font-['Roboto','Liberation_Sans',sans-serif] text-black">
      <header className="flex h-[23px] shrink-0 items-center bg-linear-to-b from-[#2a7cf0] via-[#0456e2] to-[#0560f8] pr-[2px] pl-[2px]">
        <Glyph size={14}><path d="M1 2l5 1 3 4 5-6M2 15l5-8 4 8h4" stroke="#111" strokeWidth="2.600" /><path d="M3 14L14 1" stroke="#e8e8e8" strokeWidth="1.600" /></Glyph>
        <h1 className="ml-[3px] text-[12px] font-bold whitespace-pre text-white">
          {"Mastercam Mill X4  C:\\DOCUMENTS AND SETTINGS\\ΜΗΧΑΝΟΥΡΓΕΙΟ\\ΕΠΙΦΆΝΕΙΑ ΕΡΓΑΣΊΑΣ\\KALO_3_501.MCX"}
        </h1>
        <div className="ml-auto flex gap-[2px]">
          <button type="button" aria-label="Minimize" className="flex h-[19px] w-[19px] items-center justify-center rounded-[3px] border border-white bg-[#2f63dc]">
            <Glyph size={13}><path d="M2 12h7" stroke="#fff" strokeWidth="3" /></Glyph>
          </button>
          <button type="button" aria-label="Restore" className="flex h-[19px] w-[19px] items-center justify-center rounded-[3px] border border-white bg-[#2f63dc]">
            <Glyph size={13}><path d="M5 5V2h9v8h-3M2 6h9v8H2z" stroke="#fff" strokeWidth="2" /></Glyph>
          </button>
          <button type="button" aria-label="Close" className="flex h-[19px] w-[19px] items-center justify-center rounded-[3px] border border-white bg-[#dd4b26]">
            <Glyph size={13}><path d="M2 2l12 12M14 2L2 14" stroke="#fff" strokeWidth="2.500" /></Glyph>
          </button>
        </div>
      </header>
      <nav className="flex h-[19px] shrink-0 items-center gap-[9px] pb-[2px] pl-[5px] text-[10px]">
        {menus.map((menu) => (
          <button key={menu} type="button">{menu}</button>
        ))}
      </nav>
      <Toolbars />
      <main className="flex min-h-0 flex-1">
        <OperationsPanel />
        <Viewport />
        <aside className="flex w-[27px] shrink-0 flex-col overflow-hidden border-l border-white bg-[#ece9d8]">
          <SideGroup items="pan slots sphere open" />
          <div className="mt-[118px] border-t border-[#aca998]">
            <SideGroup items="quickPlus quickCam quickLine quickArc quickPoly quickBox quickBall quickGlobe | quickTwo quickTwo | quickSlab quickDisk | quickDim | ban clump" />
          </div>
        </aside>
      </main>
      <StatusBar />
      <VerifyDialog />
    </div>
  );
}
